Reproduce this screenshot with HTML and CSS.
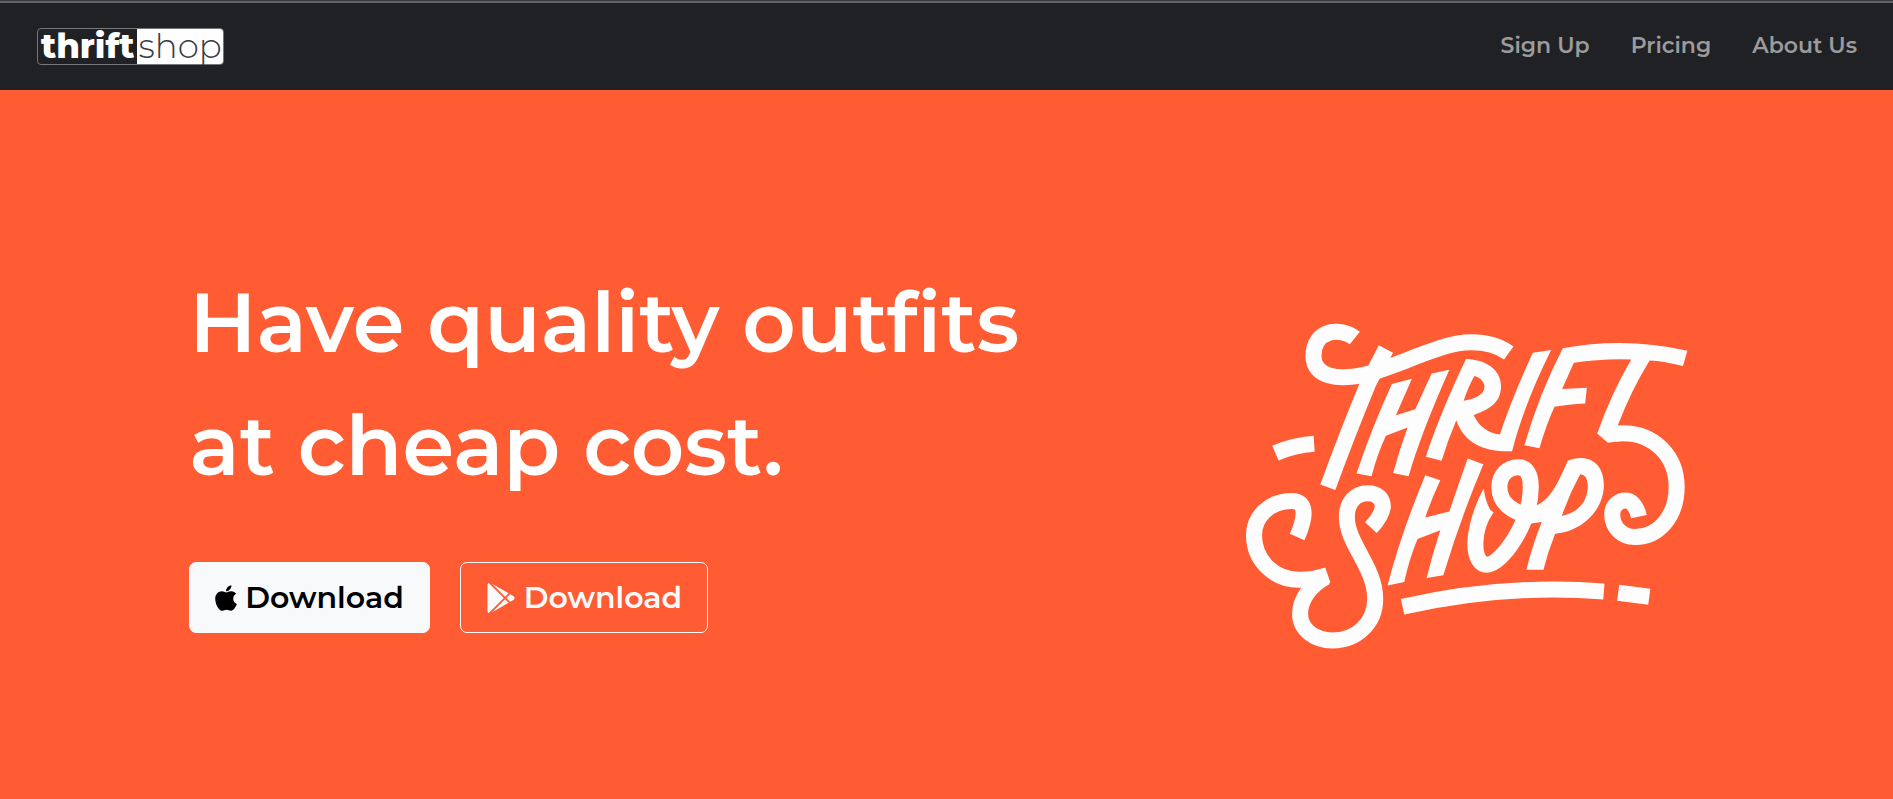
FILE: index.html
```html
<!DOCTYPE html>
<html lang="en">
<head>
<meta charset="utf-8">
<title>Thriftshop</title>
<link rel="stylesheet" href="styles.css">
</head>
<body>
<header class="navbar">
  <a class="brand" href="#"><span class="brand-bold">thrift</span><span class="brand-light">shop</span></a>
  <nav class="nav-links">
    <a href="#">Sign Up</a>
    <a href="#">Pricing</a>
    <a href="#">About Us</a>
  </nav>
</header>
<main class="hero">
  <section class="hero-copy">
    <h1>Have quality outfits<br>at cheap cost.</h1>
    <div class="actions">
      <button class="btn btn-light" type="button">
        <svg class="icon-apple" viewBox="0 0 384 512" aria-hidden="true"><path d="M318.7 268.7c-.2-36.7 16.4-64.4 50-84.8-18.8-26.9-47.2-41.7-84.7-44.6-35.5-2.8-74.3 20.7-88.5 20.7-15 0-49.4-19.7-76.4-19.7C63.3 141.2 4 184.8 4 273.5q0 39.3 14.4 81.2c12.8 36.7 59 126.7 107.2 125.2 25.2-.6 43-17.9 75.8-17.9 31.8 0 48.3 17.9 76.4 17.9 48.6-.7 90.4-82.5 102.6-119.3-65.2-30.7-61.7-90-61.7-91.9zm-56.6-164.2c27.3-32.4 24.8-61.9 24-72.5-24.1 1.4-52 16.4-67.9 34.9-17.5 19.8-27.8 44.3-25.6 71.9 26.1 2 49.9-11.4 69.5-34.3z"/></svg>
        <span>Download</span>
      </button>
      <button class="btn btn-outline" type="button">
        <svg class="icon-play" viewBox="0 0 512 512" aria-hidden="true"><path d="M325.3 234.3L104.6 13l280.8 161.2-60.1 60.1zM47 0C34 6.8 25.3 19.2 25.3 35.3v441.3c0 16.1 8.7 28.5 21.7 35.3l256.6-256L47 0zm425.2 225.6l-58.9-34.1-65.7 64.5 65.7 64.5 60.1-34.1c18-14.3 18-46.5-1.2-60.8zM104.6 499l280.8-161.2-60.1-60.1L104.6 499z"/></svg>
        <span>Download</span>
      </button>
    </div>
  </section>
  <svg class="hero-art" viewBox="40 36 1330 982" role="img" aria-label="Thrift Shop">
    <g class="brush">
      <path d="M372 84C330 50 248 58 248 138C248 200 320 212 400 194C460 180 560 135 640 110C670 101 690 97 720 97C760 97 800 105 833 129"/>
      <path d="M465 117L412 220Q350 370 291 531"/>
      <path d="M134 429Q190 405 250 401"/>
      <path d="M1150 371Q1160 369 1175 369C1270 369 1336 440 1336 530C1336 620 1280 680 1212 680C1170 680 1143 650 1143 612C1143 585 1165 568 1188 571C1205 574 1218 595 1223 619"/>
      <path d="M199 680C225 622 230 572 183 572C115 572 70 620 70 675C70 750 130 808 205 808Q250 808 291 794"/>
      <path d="M285 800C240 825 208 865 208 910C208 960 255 990 305 990C375 990 433 940 433 865C433 770 348 700 348 620C348 575 375 549 410 549C440 549 456 565 456 590Q452 618 420 652"/>
      <path d="M768 592C745 625 733 660 733 700C733 745 750 763 768 763C810 763 899 640 899 530C899 490 885 471 862 471C830 471 805 495 805 530C805 580 850 612 900 614"/>
      <path d="M515 889Q820 820 1118 843"/>
      <path d="M1161 847L1254 859"/>
    </g>
    <g class="shapes">
      <path d="M483 222L543 206L495 315L553 297L602 190L655 179Q570 370 533 498L487 488Q505 420 530 352L465 377Q440 430 422 498L377 490Q420 360 483 222Z"/>
      <path d="M705 147C780 150 810 190 810 228C810 280 770 300 728 315C745 350 770 367 807 373C830 300 870 205 905 128L960 120C910 220 870 320 843 423C760 425 700 400 676 330Q650 390 632 452L585 440C610 360 660 240 705 147ZM730 198Q712 230 698 272C750 262 762 245 760 225Q752 203 730 198Z"/>
      <path d="M995 115Q1180 80 1368 122L1355 168Q1300 153 1255 151Q1200 240 1160 345L1165 393L1130 398L1098 370Q1140 250 1200 148Q1110 145 1028 158L993 237L1067 233L1062 280Q1010 282 970 290Q945 345 925 414L880 405Q925 250 995 115Z"/>
      <path d="M583 495L628 510Q600 570 583 622L655 604Q680 530 710 445L757 462Q690 620 637 795L587 803Q605 730 628 660L560 686Q535 745 520 815L470 825Q510 670 583 495Z"/>
      <path d="M758 535Q763 575 780 603L762 640L716 645Q730 585 758 535Z"/>
      <path d="M1010 452C1060 430 1118 450 1118 525C1118 600 1050 665 972 670Q950 725 937 778L886 778Q905 700 932 635L890 641L910 587C955 575 980 520 1010 452ZM1047 492Q1015 550 992 617C1050 605 1070 565 1070 525Q1068 492 1047 492Z"/>
    </g>
  </svg>
</main>
</body>
</html>
```
FILE: styles.css
```css
* {
  box-sizing: border-box;
}

body {
  margin: 0;
  min-height: 100vh;
  display: flex;
  flex-direction: column;
  background: #ff5c33;
  font-family: Montserrat, Inter, "Open Sans", sans-serif;
  font-weight: 600;
}

.navbar {
  display: flex;
  align-items: center;
  justify-content: space-between;
  height: 90px;
  padding: 1px 36px 0 37px;
  border-top: 1px solid #38383b;
  background: #202125;
  box-shadow: inset 0 2px #646265;
}

.brand {
  display: flex;
  border: 1px solid #75757c;
  border-radius: 4px;
  font-size: 34px;
  line-height: 35px;
  text-decoration: none;
}

.brand-bold {
  padding: 0 2px 0 3px;
  color: #fff;
  font-weight: 800;
}

.brand-light {
  padding: 0 1px 0 2px;
  border-radius: 0 3px 3px 0;
  background: #fff;
  color: #3c3c46;
  font-weight: 300;
}

.nav-links {
  display: flex;
  gap: 41px;
}

.nav-links a {
  color: #9b9b9c;
  font-size: 22px;
  line-height: 32px;
  text-decoration: none;
}

.hero {
  display: flex;
  flex: 1;
  align-items: flex-start;
  justify-content: space-between;
  padding: 171px 205px 100px 10%;
  color: #fff;
}

.hero h1 {
  margin: 0 0 55px;
  font-size: 83px;
  font-weight: 600;
  line-height: 123px;
}

.actions {
  display: flex;
  gap: 30px;
}

.btn {
  display: flex;
  align-items: center;
  gap: 8px;
  height: 71px;
  padding: 0 25px;
  border: 1px solid #f8f9fa;
  border-radius: 7px;
  font: inherit;
  font-size: 30px;
}

.btn svg {
  height: 30px;
  fill: currentColor;
}

.btn-light {
  background: #f8f9fa;
  color: #000;
}

.btn-outline {
  background: transparent;
  color: #f8f9fa;
}

.icon-apple {
  width: 22px;
}

.icon-play {
  width: 30px;
}

.hero-art {
  width: 444px;
  margin-top: 61px;
}

.brush path {
  fill: none;
  stroke: #fdfdfd;
  stroke-width: 48;
  stroke-linejoin: round;
}

.shapes path {
  fill: #fdfdfd;
  fill-rule: evenodd;
}
```
